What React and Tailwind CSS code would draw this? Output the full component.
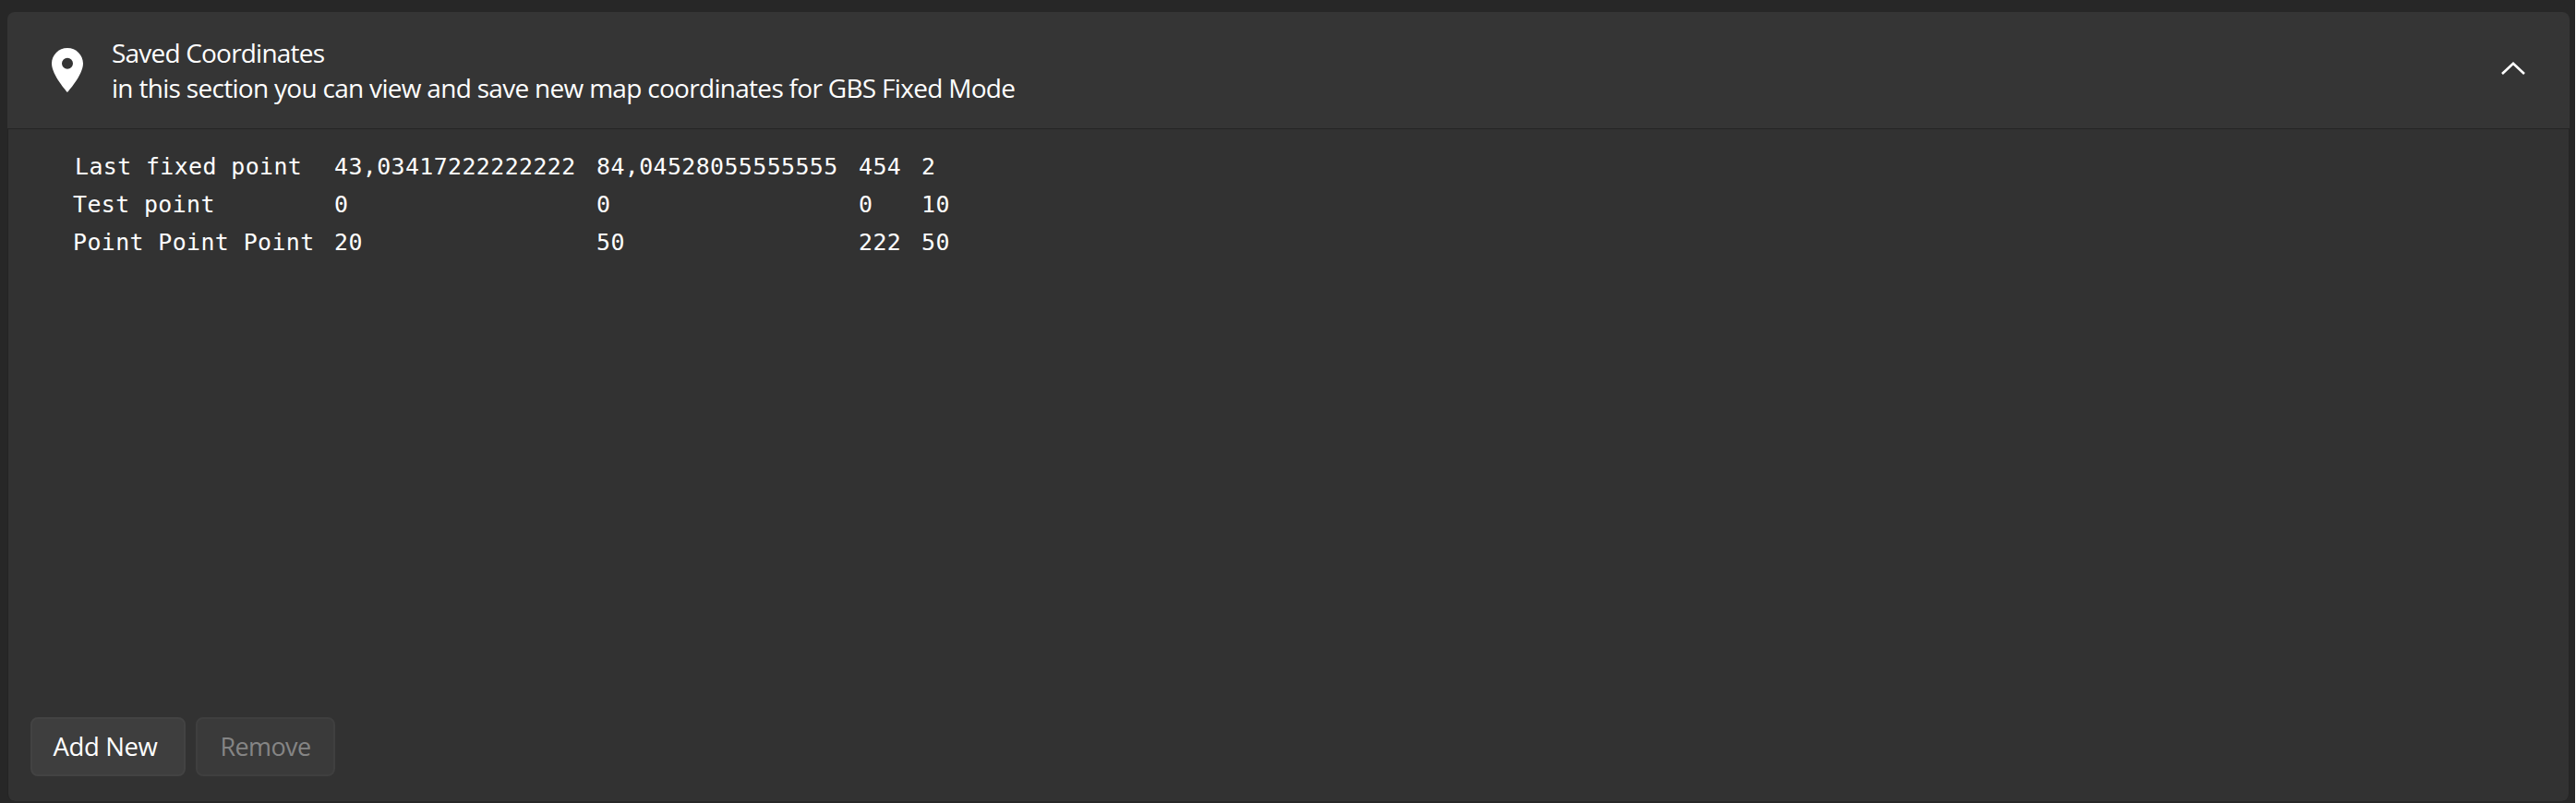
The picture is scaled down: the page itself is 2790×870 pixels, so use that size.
const POINTS = [
  ["Last fixed point", "43,03417222222222", "84,04528055555555", "454", "2"],
  ["Test point", "0", "0", "0", "10"],
  ["Point Point Point", "20", "50", "222", "50"],
];

function PinIcon() {
  return (
    <svg viewBox="0 0 34 48" className="h-12 w-[34px] shrink-0" fill="#fff">
      <path
        fillRule="evenodd"
        d="M17 0C7.6 0 0 7.5 0 16.8C0 29.4 17 48 17 48S34 29.4 34 16.8C34 7.5 26.4 0 17 0ZM17 22.8a6 6 0 1 1 0-12a6 6 0 0 1 0 12Z"
      />
    </svg>
  );
}

export default function App() {
  return (
    <div className="flex h-[870px] w-[2790px] overflow-hidden border-r border-white bg-[#272727] pt-[13px] pr-[6px] pb-[2px] pl-[8px] text-white">
      <section className="flex flex-1 flex-col overflow-hidden rounded-lg font-['Open_Sans',sans-serif] text-[28px] leading-[38px]">
        <header className="flex h-[127px] shrink-0 items-center border-b border-[#242424] bg-[#353535] pr-[48px] pl-[48px]">
          <PinIcon />
          <div className="ml-[31px] flex-1 tracking-[-0.7px] whitespace-nowrap">
            <div className="tracking-[-0.8px]">Saved Coordinates</div>
            <div>in this section you can view and save new map coordinates for GBS Fixed Mode</div>
          </div>
          <svg viewBox="0 0 26 14" className="mb-1 h-[14px] w-[26px]" fill="none" stroke="#fff" strokeWidth="2.6">
            <path d="M1 13L13 1.8L25 13" />
          </svg>
        </header>
        <div className="flex flex-1 flex-col rounded-b-lg border-x border-[#242424] bg-[#323232]">
          <div className="grid grid-cols-[283px_284px_284px_68px_100px] pt-[20px] pl-[70px] font-['DejaVu_Sans_Mono',monospace] text-[24.9px] leading-[41px] tracking-[0.4px] whitespace-nowrap">
            {POINTS.map((row, r) =>
              row.map((cell, c) => (
                <span key={r + "-" + c} className={r === 0 && c === 0 ? "pl-[2px]" : ""}>
                  {cell}
                </span>
              ))
            )}
          </div>
          <div className="mt-auto flex gap-[11px] pb-[27px] pl-[24px]">
            <button className="h-16 w-[168px] rounded-lg border-2 border-[#434343] bg-[#3e3e3e] pr-1.5 text-[27.5px] tracking-[-0.35px]">
              Add New
            </button>
            <button className="h-16 w-[151px] rounded-lg border-2 border-[#3f3f3f] bg-[#3a3a3a] text-[27px] tracking-[-0.6px] text-[#858585]">
              Remove
            </button>
          </div>
        </div>
      </section>
    </div>
  );
}
